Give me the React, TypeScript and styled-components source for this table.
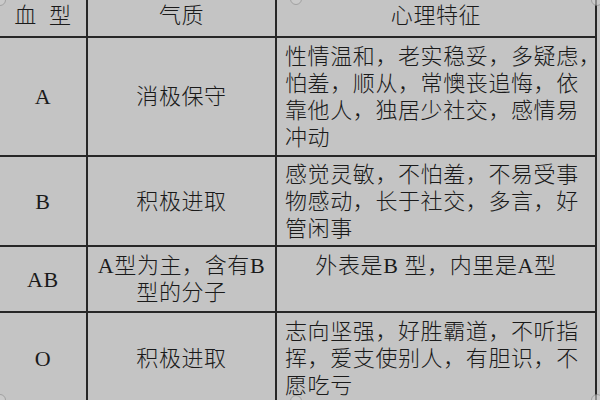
import React from 'react';
import styled, { createGlobalStyle } from 'styled-components';

const GlobalStyle = createGlobalStyle`
    html, body {
        margin: 0;
        padding: 0;
        background: #c4c4c4;
        overflow: hidden;
    }
`

const Page = styled.div`
    position: relative;
    width: 600px;
    height: 400px;
    overflow: hidden;
    background: #c4c4c4;
`

const Grid = styled.div`
    display: grid;
    grid-template-columns: 86px 187px 318px;
    grid-template-rows: 36px 117px 88px 64px 90px;
    gap: 2px;
    width: max-content;
    padding-right: 2px;
    background: #262626;
    color: #1a1a1a;
    font-family: "Liberation Serif", "Noto Sans CJK SC", serif;
    font-size: 22px;
    font-weight: 300;
    line-height: 27px;
`

const Head = styled.div`
    background: #c4c4c4;
    display: flex;
    justify-content: center;
    align-items: flex-start;
    padding-top: 2px;
    white-space: pre;
    letter-spacing: 0.6px;
`

const Cell = styled.div<{ $left?: boolean }>`
    background: #c4c4c4;
    display: flex;
    flex-direction: column;
    justify-content: center;
    align-items: ${p => (p.$left ? 'flex-start' : 'center')};
    padding-left: ${p => (p.$left ? '8px' : '0')};
    letter-spacing: 0.6px;
    min-width: 0;
`

const Line = styled.span`
    display: block;
    white-space: pre;
    min-height: 27px;
`

const Handle = styled.span<{ $x: number; $y: number }>`
    position: absolute;
    left: ${p => p.$x - 6}px;
    top: ${p => p.$y - 6}px;
    width: 10px;
    height: 10px;
    border: 1px solid #8a8a8a;
    border-radius: 50%;
    background: #cfcfcf;
    opacity: 0.6;
`

const rows = [
    {
        type: 'A',
        temper: ['消极保守'],
        traits: ['性情温和，老实稳妥，多疑虑，', '怕羞，顺从，常懊丧追悔，依', '靠他人，独居少社交，感情易', '冲动'],
    },
    {
        type: 'B',
        temper: ['积极进取'],
        traits: ['感觉灵敏，不怕羞，不易受事', '物感动，长于社交，多言，好', '管闲事'],
    },
    {
        type: 'AB',
        temper: ['A型为主，含有B', '型的分子'],
        traits: ['外表是B 型，内里是A型', ' '],
        centered: true,
    },
    {
        type: 'O',
        temper: ['积极进取'],
        traits: ['志向坚强，好胜霸道，不听指', '挥，爱支使别人，有胆识，不', '愿吃亏'],
    },
];

const handles = [
    [0, 0], [296, -1], [597, 0],
    [0, 400], [296, 401], [597, 400],
];

export default function App() {
    return (
        <Page>
            <GlobalStyle />
            <Grid>
                <Head>{'血  型'}</Head>
                <Head>气质</Head>
                <Head>心理特征</Head>
                {rows.map(r => (
                    <React.Fragment key={r.type}>
                        <Cell>
                            <Line>{r.type}</Line>
                        </Cell>
                        <Cell>
                            {r.temper.map((t, i) => (
                                <Line key={i}>{t}</Line>
                            ))}
                        </Cell>
                        <Cell $left={!r.centered}>
                            {r.traits.map((t, i) => (
                                <Line key={i}>{t}</Line>
                            ))}
                        </Cell>
                    </React.Fragment>
                ))}
            </Grid>
            {handles.map(([x, y], i) => (
                <Handle key={i} $x={x} $y={y} />
            ))}
        </Page>
    );
}
